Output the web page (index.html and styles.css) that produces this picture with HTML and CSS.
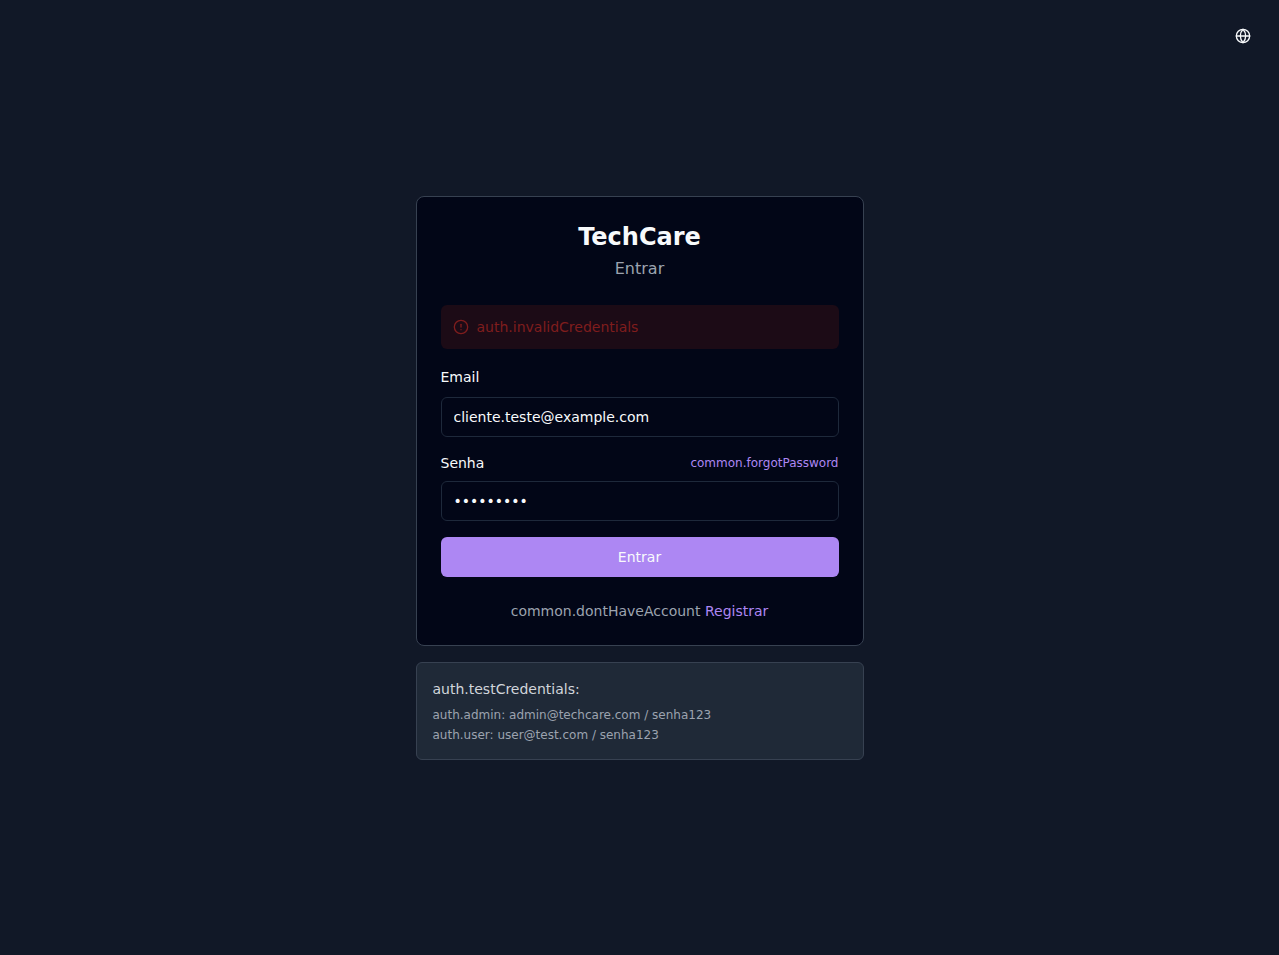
FILE: index.html
```html
<!DOCTYPE html>
<html lang="pt-BR">
<head>
<meta charset="utf-8">
<meta name="viewport" content="width=device-width, initial-scale=1">
<title>TechCare</title>
<link rel="stylesheet" href="styles.css">
</head>
<body>
<div class="page">
  <header class="topbar">
    <button class="language" type="button" aria-label="Idioma">
      <svg class="icon" viewBox="0 0 24 24" aria-hidden="true"><circle cx="12" cy="12" r="10"/><path d="M12 2a14.5 14.5 0 0 0 0 20 14.5 14.5 0 0 0 0-20"/><path d="M2 12h20"/></svg>
    </button>
  </header>
  <main class="content">
    <section class="card">
      <div class="card-header">
        <h1 class="title">TechCare</h1>
        <p class="subtitle">Entrar</p>
      </div>
      <form class="form">
        <div class="alert" role="alert">
          <svg class="icon" viewBox="0 0 24 24" aria-hidden="true"><circle cx="12" cy="12" r="10"/><path d="M12 8v4"/><path d="M12 16h.01"/></svg>
          <span>auth.invalidCredentials</span>
        </div>
        <div class="field">
          <label class="label label-tall" for="email">Email</label>
          <input class="input" id="email" type="email" value="cliente.teste@example.com">
        </div>
        <div class="field">
          <div class="label-row">
            <label class="label" for="password">Senha</label>
            <a class="link forgot" href="#">common.forgotPassword</a>
          </div>
          <input class="input" id="password" type="password" value="cliente12">
        </div>
        <button class="submit" type="submit">Entrar</button>
      </form>
      <p class="register">common.dontHaveAccount <a class="link" href="#">Registrar</a></p>
    </section>
    <aside class="credentials">
      <h2 class="credentials-title">auth.testCredentials:</h2>
      <p class="credential">auth.admin: admin@techcare.com / senha123</p>
      <p class="credential">auth.user: user@test.com / senha123</p>
    </aside>
  </main>
</div>
</body>
</html>
```

FILE: styles.css
```css
*, *::before, *::after { box-sizing: border-box; }

body, h1, h2, p { margin: 0; }

body {
  background: #111827;
  color: #f8fafc;
  font-family: "DejaVu Sans", sans-serif;
  font-size: 14px;
  line-height: 20px;
}

button, input { font: inherit; }

.page {
  min-height: 100vh;
  display: grid;
  grid-template-rows: 1fr auto 1fr;
  padding: 16px;
}

.topbar {
  display: flex;
  justify-content: flex-end;
  align-items: flex-start;
}

.language {
  display: flex;
  align-items: center;
  justify-content: center;
  width: 40px;
  height: 40px;
  padding: 0;
  border: 0;
  border-radius: 6px;
  background: transparent;
  color: #f8fafc;
  cursor: pointer;
}

.icon {
  flex: none;
  width: 16px;
  height: 16px;
  fill: none;
  stroke: currentColor;
  stroke-width: 2;
  stroke-linecap: round;
  stroke-linejoin: round;
}

.content {
  width: 100%;
  max-width: 448px;
  margin: 0 auto;
  display: flex;
  flex-direction: column;
  gap: 16px;
}

.card {
  display: flex;
  flex-direction: column;
  gap: 24px;
  padding: 24px;
  border: 1px solid #374151;
  border-radius: 8px;
  background: #020617;
}

.card-header {
  display: flex;
  flex-direction: column;
  gap: 4px;
  text-align: center;
}

.title {
  font-size: 24px;
  line-height: 32px;
  font-weight: 700;
}

.subtitle {
  color: #9ca3af;
  font-size: 16px;
  line-height: 24px;
}

.form {
  display: flex;
  flex-direction: column;
  gap: 16px;
}

.alert {
  display: flex;
  align-items: center;
  gap: 8px;
  padding: 12px;
  border-radius: 6px;
  background: #1c0b16;
  color: #7f1d1d;
}

.field {
  display: flex;
  flex-direction: column;
  gap: 8px;
}

.label-tall { line-height: 24px; }

.label-row {
  display: flex;
  align-items: center;
  justify-content: space-between;
}

.input {
  width: 100%;
  height: 40px;
  padding: 8px 12px;
  border: 1px solid #1e293b;
  border-radius: 6px;
  background: #020617;
  color: #f8fafc;
}

.link {
  color: #ad87f3;
  text-decoration: none;
}

.forgot {
  font-size: 12px;
  line-height: 16px;
}

.submit {
  height: 40px;
  border: 0;
  border-radius: 6px;
  background: #ad87f3;
  color: #f8fafc;
  cursor: pointer;
}

.register {
  color: #9ca3af;
  text-align: center;
}

.credentials {
  display: flex;
  flex-direction: column;
  gap: 4px;
  padding: 16px;
  border: 1px solid #374151;
  border-radius: 6px;
  background: #1f2937;
}

.credentials-title {
  margin-bottom: 4px;
  color: #d1d5db;
  font-size: 14px;
  font-weight: 400;
}

.credential {
  color: #9ca3af;
  font-size: 12px;
  line-height: 16px;
}
```
